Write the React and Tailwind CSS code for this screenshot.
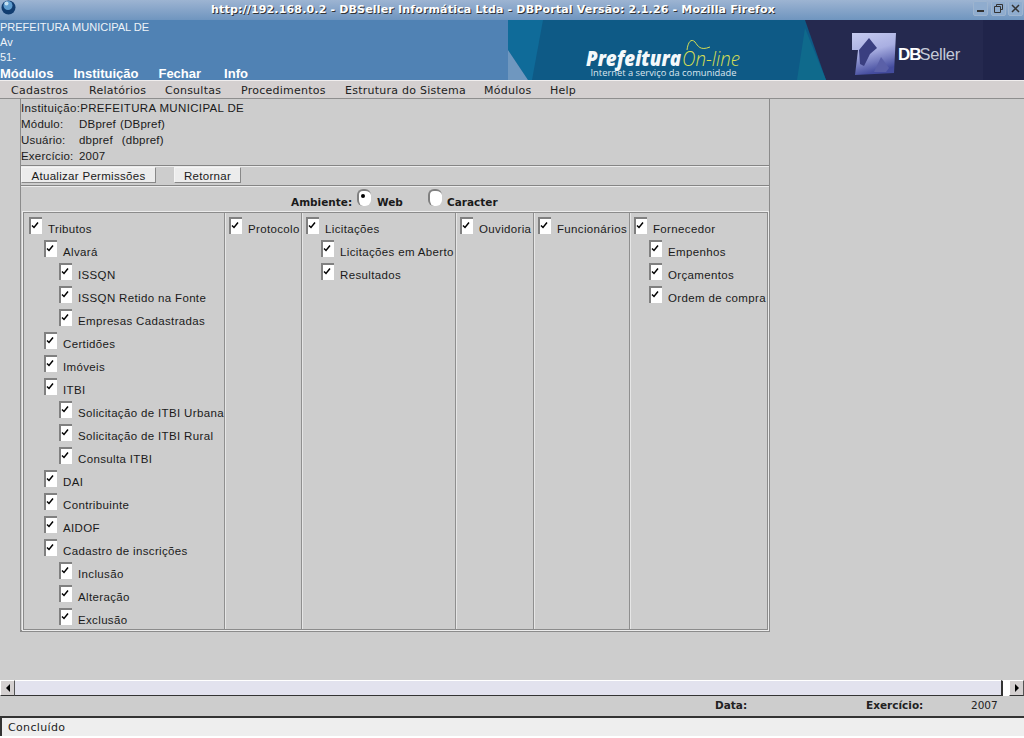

const lib = { fontFamily: '"Liberation Sans", Arial, sans-serif' };
const djv = { fontFamily: '"DejaVu Sans", sans-serif' };

function Check({ label, level = 0, pad }) {
  return (
    <div className="flex h-[23px] items-start text-[11.5px] tracking-[0.35px] text-[#1a1a1a]" style={{ paddingLeft: pad + level * 15 }}>
      <span className="relative h-[17px] w-[13px] shrink-0 border-l-2 border-t-2 border-l-[#808080] border-t-[#808080] bg-white">
        <svg className="absolute left-[0px] top-[3px]" width="8" height="7" viewBox="0 0 8 7">
          <path d="M1 3.5 L3 5.5 L7 0.5" fill="none" stroke="#000" strokeWidth="1.5" />
        </svg>
      </span>
      <span className="ml-[6px] mt-[5px] whitespace-nowrap leading-[14px]">{label}</span>
    </div>
  );
}

function Col({ w, items, last, pad }) {
  return (
    <div className={`pt-[4px] shrink-0 overflow-hidden ${last ? "" : "border-r border-r-[#8f8f8f] shadow-[1px_0_0_#e6e6e6]"}`} style={{ width: w }}>
      {items.map(([l, lv]) => <Check key={l} label={l} level={lv} pad={pad} />)}
    </div>
  );
}

const cols = [
  [201, [["Tributos",0],["Alvará",1],["ISSQN",2],["ISSQN Retido na Fonte",2],["Empresas Cadastradas",2],["Certidões",1],["Imóveis",1],["ITBI",1],["Solicitação de ITBI Urbana",2],["Solicitação de ITBI Rural",2],["Consulta ITBI",2],["DAI",1],["Contribuinte",1],["AIDOF",1],["Cadastro de inscrições",1],["Inclusão",2],["Alteração",2],["Exclusão",2]]],
  [77, [["Protocolo",0]]],
  [154, [["Licitações",0],["Licitações em Aberto",1],["Resultados",1]]],
  [78, [["Ouvidoria",0]]],
  [96, [["Funcionários",0]]],
  [137, [["Fornecedor",0],["Empenhos",1],["Orçamentos",1],["Ordem de compra",1]]],
];

function Rule() {
  return <div className="h-[2px] border-t border-t-[#858585] border-b border-b-[#ececec]" />;
}

function Logo() {
  return (
    <svg width="516" height="60" viewBox="0 0 516 60" className="block">
      <defs>
        <linearGradient id="logoA" x1="0" y1="0" x2="0.3" y2="1">
          <stop offset="0" stopColor="#c6cbf0" />
          <stop offset="0.5" stopColor="#a9afe2" />
          <stop offset="1" stopColor="#444c9e" />
        </linearGradient>
      </defs>
      <rect width="516" height="60" fill="#0e5a86" />
      <polygon points="0,0 35,0 24,60 20,60 0,30" fill="#0f6b99" />
      <polygon points="0,30 20,60 0,60" fill="#6f97bf" />
      <polygon points="297,0 516,0 516,60 318,60" fill="#25294f" />
      <polygon points="475,0 516,0 516,60 475,60" fill="#20244a" />
      <polygon points="297,8 318,60 289,60" fill="#0f6a8c" />
      <text x="78" y="45.5" fontFamily="'Open Sans', sans-serif" fontStyle="italic" fontWeight="800" fontSize="21" textLength="95" lengthAdjust="spacingAndGlyphs" fill="#f4f8fa">Prefeitura</text>
      <text x="174" y="45.5" fontFamily="'Open Sans', sans-serif" fontStyle="italic" fontWeight="300" fontSize="21" textLength="58" lengthAdjust="spacingAndGlyphs" fill="#d4de55">On-line</text>
      <path d="M179 30 C180 22 183 18 187 22 C190 26 192 31 202 27" fill="none" stroke="#d4de55" strokeWidth="1" />
      <text x="82.5" y="56" fontFamily="'Open Sans', sans-serif" fontSize="9.7" textLength="146" lengthAdjust="spacingAndGlyphs" fill="#dce6ee">Internet a serviço da comunidade</text>
      <path d="M344 13 L388 13 L386 53 L347 55 L350 30 L344 30Z" fill="url(#logoA)" />
      <path d="M351 30 L361 18 L369 28 L362 34 L356 46 L352 44Z" fill="#3a3f80" />
      <path d="M366 52 L373 37 L381 48 L378 52Z" fill="#5a60a8" />
      <text x="390" y="40" fontFamily="'Liberation Sans', sans-serif" fontWeight="700" fontSize="17" letterSpacing="-1" fill="#ffffff">DB</text>
      <text x="411.5" y="40" fontFamily="'Liberation Sans', sans-serif" fontSize="16.5" letterSpacing="-0.3" fill="#c5cad8">Seller</text>
    </svg>
  );
}

function WinBtn({ children }) {
  return <div className="flex h-[15px] w-[15px] items-center justify-center rounded-[2px] border border-[#9db4cf] bg-[#8facce]">{children}</div>;
}

export default function App() {
  return (
    <div className="flex h-[738px] w-[1024px] flex-col overflow-hidden bg-[#cdcdcd]" style={lib}>
      {/* title bar */}
      <div className="relative flex h-[20px] shrink-0 items-center justify-center bg-gradient-to-b from-[#9db4d2] to-[#6f95bf] text-[11px] font-bold tracking-[0.17px] text-white [text-shadow:1px_1px_0_#333]" style={djv}>
        <svg className="absolute left-[1px] top-[0px]" width="15" height="15" viewBox="0 0 15 15">
          <circle cx="7.5" cy="7.5" r="7" fill="#123d70" />
          <circle cx="7" cy="5.5" r="4.5" fill="#5f9dd0" />
          <circle cx="5.5" cy="3.5" r="2" fill="#c3e0f2" />
        </svg>
        <span className="-translate-x-[19px]">http://192.168.0.2 - DBSeller Informática Ltda - DBPortal Versão: 2.1.26 - Mozilla Firefox</span>
        <div className="absolute right-[1px] top-[1px] flex gap-[2.5px] text-[#333] [text-shadow:none]">
          <WinBtn><span className="mt-[5px] block h-[2px] w-[7px] bg-[#333]" /></WinBtn>
          <WinBtn><svg width="9" height="9" viewBox="0 0 9 9"><path d="M2.5 2.5V.5h6v5h-2M.5 2.5h6v6h-6z" fill="none" stroke="#333" /></svg></WinBtn>
          <WinBtn><svg width="9" height="9" viewBox="0 0 9 9"><path d="M1 1l7 7M8 1l-7 7" stroke="#333" strokeWidth="1.5" /></svg></WinBtn>
        </div>
      </div>

      {/* header */}
      <div className="flex h-[60px] shrink-0 justify-between bg-[#5082b4] text-white">
        <div className="w-[508px]">
          <div className="h-[15px] pt-[1px] text-[11px] leading-[13px] text-[#eef3f8]">PREFEITURA MUNICIPAL DE</div>
          <div className="h-[15px] text-[11px] leading-[15px] text-[#eef3f8]">Av</div>
          <div className="h-[15px] text-[11px] leading-[15px] text-[#eef3f8]">51-</div>
          <div className="flex h-[15px] gap-[20px] pt-[1px] text-[13px] font-bold leading-[15px]">
            <span>Módulos</span><span>Instituição</span><span>Fechar</span><span className="ml-[3px]">Info</span>
          </div>
        </div>
        <Logo />
      </div>

      {/* menu */}
      <div className="flex h-[19px] shrink-0 items-center border-t border-t-[#f1eeee] border-b border-b-[#8e8e8e] bg-[#d4d0d0] pl-[11px] pt-[4px] text-[11px] tracking-[0.25px] text-[#222]" style={djv}>
        <span className="w-[78px]">Cadastros</span>
        <span className="w-[76px]">Relatórios</span>
        <span className="w-[76px]">Consultas</span>
        <span className="w-[104px]">Procedimentos</span>
        <span className="w-[139px]">Estrutura do Sistema</span>
        <span className="w-[66px]">Módulos</span>
        <span>Help</span>
      </div>

      {/* main */}
      <div className="min-h-0 flex-1">
        <div className="ml-[20px] h-[533px] w-[750px] border-x border-b-2 border-l-[#8b8b8b] border-r-[#8b8b8b] border-b-[#8b8b8b] text-[11.5px] tracking-[0.2px] text-[#1a1a1a]">
          <div className="pt-[1px] pb-[1px] leading-[16px]">
            <div className="tracking-[0.35px]">Instituição:PREFEITURA MUNICIPAL DE</div>
            <div className="flex"><span className="w-[58px]">Módulo:</span><span>DBpref<span className="ml-[4px]">(DBpref)</span></span></div>
            <div className="flex"><span className="w-[58px]">Usuário:</span><span>dbpref<span className="ml-[9px]">(dbpref)</span></span></div>
            <div className="flex"><span className="w-[58px]">Exercício:</span><span>2007</span></div>
          </div>
          <Rule />
          <div className="flex h-[18px] items-start gap-[18px]">
            <button className="h-[16px] w-[135px] border border-t-[#f4f4f4] border-l-[#f4f4f4] border-b-[#888] border-r-[#888] bg-[#ececec] leading-[16px] tracking-[0.3px]">Atualizar Permissões</button>
            <button className="h-[16px] w-[67px] border border-t-[#f4f4f4] border-l-[#f4f4f4] border-b-[#888] border-r-[#888] bg-[#ececec] leading-[16px] tracking-[0.3px]">Retornar</button>
          </div>
          <Rule />
          <div className="relative flex h-[25px] items-end pb-[4px] pl-[270px] text-[10.5px] font-bold tracking-normal leading-[12px]" style={djv}>
            <span className="w-[66px]">Ambiente:</span>
            <span className="relative mb-[2px] mr-[6px] h-[17px] w-[14px] rounded-[6px] border-l-2 border-t-2 border-l-[#808080] border-t-[#808080] bg-white">
              <span className="absolute left-[2px] top-[3px] h-[4px] w-[4px] rounded-full bg-black" />
            </span>
            <span className="w-[51px]">Web</span>
            <span className="mb-[2px] mr-[5px] h-[17px] w-[14px] rounded-[6px] border-l-2 border-t-2 border-l-[#808080] border-t-[#808080] bg-white" />
            <span>Caracter</span>
          </div>
          <div className="ml-[2px] flex h-[418px] w-[745px] border border-[#8b8b8b] shadow-[0_0_0_1px_#ececec]">
            {cols.map(([w, items], i) => <Col key={i} w={w} items={items} last={i === 5} pad={i === 0 ? 5 : 4} />)}
          </div>
        </div>
      </div>

      {/* scrollbar */}
      <div className="flex h-[16px] shrink-0 items-stretch">
        <div className="flex w-[15px] items-center justify-center border border-t-white border-l-white border-b-[#333] border-r-[#555] bg-[#d4d0d0]">
          <span className="h-0 w-0 border-y-[4px] border-r-[4px] border-y-transparent border-r-black" />
        </div>
        <div className="flex-1 border-t border-t-white border-b border-b-[#333] bg-[#e2e2ee]" />
        <div className="w-[8px] border-l-2 border-t border-l-[#333] border-t-white bg-white" />
        <div className="flex w-[15px] items-center justify-center border border-t-white border-l-white border-b-[#333] border-r-[#555] bg-[#d4d0d0]">
          <span className="h-0 w-0 border-y-[4px] border-l-[4px] border-y-transparent border-l-black" />
        </div>
      </div>

      {/* info bar */}
      <div className="relative flex h-[20px] shrink-0 items-center text-[10.5px] text-[#222]" style={djv}>
        <span className="ml-[715px] w-[151px] font-bold">Data:</span>
        <span className="w-[105px] font-bold">Exercício:</span>
        <span>2007</span>
      </div>

      {/* status bar */}
      <div className="flex h-[20px] shrink-0 items-center border-l-2 border-t-2 border-l-[#333] border-t-[#333] bg-[#eeeeee] pl-[6px] pt-[3px] text-[11px] tracking-[0.35px] text-[#222]" style={djv}>
        Concluído
      </div>
      <div className="h-[2px] shrink-0 bg-white" />
    </div>
  );
}
